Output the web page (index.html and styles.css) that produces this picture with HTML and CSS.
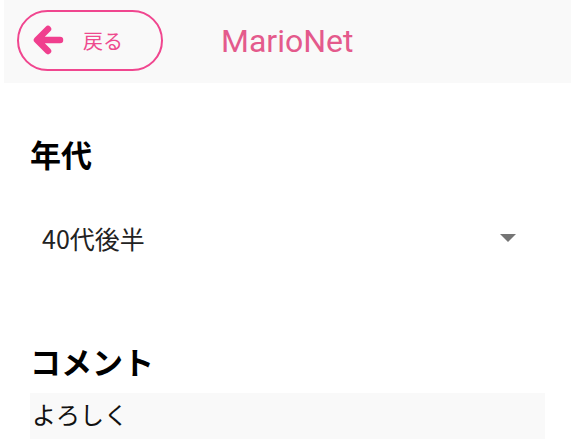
FILE: index.html
```html
<!DOCTYPE html>
<html lang="ja">
<head>
    <meta charset="UTF-8">
    <meta name="viewport" content="width=device-width, initial-scale=1.0">
    <title>MarioNet</title>
    <link rel="stylesheet" href="styles.css">
</head>
<body>
    <div class="topbar">
        <button class="back-btn">
            <svg class="back-icon" viewBox="0 0 32 32" width="32" height="32">
                <path d="M28 16 H6 M16 5 L5 16 L16 27" fill="none" stroke="#f03f8e" stroke-width="6.5" stroke-linecap="round" stroke-linejoin="round"/>
            </svg>
            <span>戻る</span>
        </button>
        <div class="brand">MarioNet</div>
    </div>

    <div class="form">
        <div class="field">
            <h2 class="label">年代</h2>
            <div class="select">
                <span class="select-value">40代後半</span>
                <span class="caret"></span>
            </div>
        </div>

        <div class="field">
            <h2 class="label">コメント</h2>
            <div class="comment">よろしく</div>
        </div>
    </div>
</body>
</html>
```

FILE: styles.css
```css
body {
    margin: 0;
    background: #fff;
    color: #000;
    font-family: Roboto, "Noto Sans CJK JP", sans-serif;
}

.topbar {
    margin: 0 9px 0 4px;
    height: 83px;
    background-color: #f9f9f9;
    display: flex;
    align-items: center;
}

.back-btn {
    margin-left: 13px;
    margin-top: -3px;
    width: 146px;
    height: 61px;
    border: 2px solid #f0468f;
    border-radius: 31px;
    background: transparent;
    display: flex;
    align-items: center;
    padding: 0 0 0 13px;
    cursor: pointer;
}

.back-icon {
    display: block;
}

.back-btn span {
    margin-left: 19px;
    font-family: "Noto Sans CJK JP", sans-serif;
    font-size: 20px;
    color: #ee4a8e;
}

.brand {
    margin-left: 58px;
    margin-top: -2px;
    font-family: Roboto, sans-serif;
    font-size: 32px;
    color: #e45a8c;
}

.form {
    padding: 0 35px 0 30px;
}

.label {
    margin: 0;
    font-family: "Noto Sans CJK JP", sans-serif;
    font-weight: bold;
    font-size: 31px;
    line-height: 36px;
}

.field:first-child .label {
    margin-top: 53px;
}

.field + .field .label {
    margin-top: 87px;
}

.select {
    margin-top: 48px;
    display: flex;
    align-items: center;
    justify-content: space-between;
    padding: 0 0 0 12px;
}

.select-value {
    font-family: "Noto Sans CJK JP", sans-serif;
    font-size: 25px;
    color: #222;
}

.caret {
    width: 0;
    height: 0;
    margin-right: 29px;
    border-left: 8px solid transparent;
    border-right: 8px solid transparent;
    border-top: 8px solid #757575;
}

.comment {
    margin-top: 14px;
    background-color: #f9f9f9;
    min-height: 60px;
    padding: 3px 0 0 2px;
    font-family: "Noto Sans CJK JP", sans-serif;
    font-size: 24px;
    color: #111;
}
```
